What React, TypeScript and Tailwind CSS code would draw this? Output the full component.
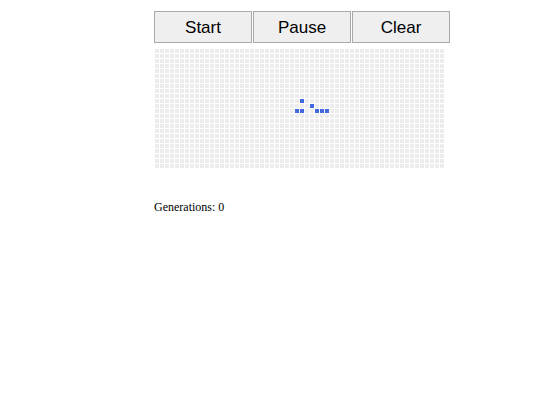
import React from "react";

const COLS = 58;
const ROWS = 24;
const live = new Set<string>(["10-29", "11-31", "12-28", "12-29", "12-32", "12-33", "12-34"]);

export default function App() {
  const cells: React.ReactNode[] = [];
  for (let r = 0; r < ROWS; r++) {
    for (let c = 0; c < COLS; c++) {
      const on = live.has(`${r}-${c}`);
      cells.push(
        <div key={`${r}-${c}`} className={on ? "w-[4px] h-[4px] bg-[#4169e1]" : "w-[4px] h-[4px] bg-[#ececec]"} />
      );
    }
  }
  return (
    <div className="bg-white w-[540px] h-[405px] pl-[154px] pt-[11px]">
      <div className="flex gap-px" style={{ fontFamily: '"Liberation Sans", Arial, sans-serif' }}>
        {["Start", "Pause", "Clear"].map((t) => (
          <button
            key={t}
            className="w-[98px] h-[32px] pt-[2px] border border-[#a9a9a9] bg-[#efefef] text-[17px] text-black flex items-center justify-center"
          >
            {t}
          </button>
        ))}
      </div>
      <div className="ml-px mt-[6px] grid grid-cols-[repeat(58,4px)] gap-px w-[290px]">
        {cells}
      </div>
      <div
        className="mt-[32px] text-[12px] text-black leading-[14px]"
        style={{ fontFamily: '"Liberation Serif", "Times New Roman", serif' }}
      >
        Generations: 0
      </div>
    </div>
  );
}
